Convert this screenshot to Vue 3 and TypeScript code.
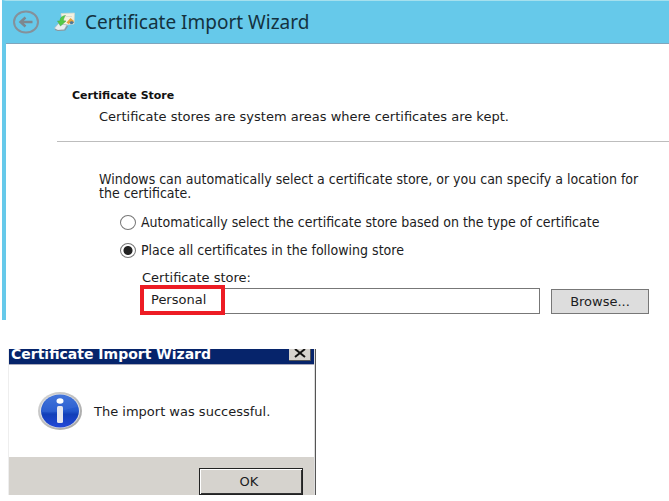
<script setup lang="ts">
import { ref } from 'vue'

type StoreMode = 'auto' | 'manual'

const mode = ref<StoreMode>('manual')
const storeName = ref('Personal')
</script>

<template>
  <main class="page">
    <section class="wizard">
      <header class="titlebar">
        <button class="back" type="button" aria-label="Back">
          <svg viewBox="0 0 26 24" width="26" height="24">
            <ellipse cx="13" cy="12" rx="12" ry="10.5" fill="none" stroke="#85919a" stroke-width="2" />
            <path d="M19.500 12H8M12.500 7.5 7.500 12l5 4.5" fill="none" stroke="#7d888f" stroke-width="2.5" />
          </svg>
        </button>
        <svg class="cert" viewBox="0 0 22 20" width="22" height="20" aria-hidden="true">
          <path d="M7 1.500 20.500 1 20 12 9 13Z" fill="#f5f1df" stroke="#d3d9cf" stroke-width=".7" />
          <path d="M12 4.5h6" stroke="#dadbd2" />
          <path d="m.5 16 4-4.500L13 13l-3 5-7 .5Z" fill="#e9eef0" stroke="#a8b4b8" stroke-width=".7" />
          <path d="m1 17.500 3 1 7-.5 2.500-4" fill="none" stroke="#87979e" stroke-width="1.200" />
          <path d="M11.500 3.500C7.500 4 6 6 6 9H3.500L6.500 14l5.500-5-2.500-.2c0-1.500.5-3.500 2-5.300Z" fill="#55ca45" stroke="#46a84a" stroke-width=".5" />
          <path d="m12.500 10.500 4-4.500 3.500 3-1 2-2-.5-2.500 1.500Z" fill="#e5a23c" />
          <path d="m15.500 10 2.500-1 2 1.500-1.500 1.500-2 .3Z" fill="#4f7897" />
        </svg>
        <h1>Certificate Import Wizard</h1>
      </header>

      <div class="sheet">
        <div class="heading">
          <h2>Certificate Store</h2>
          <p>Certificate stores are system areas where certificates are kept.</p>
        </div>
        <form class="options" @submit.prevent>
          <p class="intro">
            Windows can automatically select a certificate store, or you can specify a location for the certificate.
          </p>
          <label class="choice">
            <input v-model="mode" type="radio" name="mode" value="auto" />
            <span>Automatically select the certificate store based on the type of certificate</span>
          </label>
          <label class="choice">
            <input v-model="mode" type="radio" name="mode" value="manual" />
            <span>Place all certificates in the following store</span>
          </label>
          <div class="store">
            <label for="store-name">Certificate store:</label>
            <div class="store-row">
              <div class="field">
                <input id="store-name" v-model="storeName" type="text" />
                <span class="highlight" aria-hidden="true"></span>
              </div>
              <button class="browse" type="button">Browse...</button>
            </div>
          </div>
        </form>
      </div>
    </section>

    <section class="dialog">
      <header class="dialog-bar">
        <h2>Certificate Import Wizard</h2>
        <button class="close" type="button" aria-label="Close">
          <svg viewBox="0 0 12 10" width="12" height="10">
            <path d="m1 0 10 8M11 0 1 8" stroke="#111" stroke-width="2" />
          </svg>
        </button>
      </header>
      <div class="message">
        <svg viewBox="0 0 46 40" width="46" height="40" aria-hidden="true">
          <defs>
            <linearGradient id="rim" x1="0" y1="0" x2="1" y2="1">
              <stop offset="0" stop-color="#d8d8d8" />
              <stop offset="1" stop-color="#a2a2a2" />
            </linearGradient>
            <linearGradient id="ball" x1="0" y1="0" x2="0" y2="1">
              <stop offset="0" stop-color="#3c70d8" />
              <stop offset=".5" stop-color="#2357cc" />
              <stop offset=".6" stop-color="#123fb8" />
              <stop offset="1" stop-color="#2348d8" />
            </linearGradient>
          </defs>
          <ellipse cx="23" cy="20" rx="22" ry="19" fill="url(#rim)" />
          <ellipse cx="23" cy="20" rx="20" ry="17" fill="#e2e4e8" />
          <ellipse cx="23" cy="20" rx="19" ry="16.500" fill="url(#ball)" />
          <path d="M5 21C5 11 13 4 23 4c9 0 16 5 18 12-10 1-18 7-36 5Z" fill="#6d94ec" opacity=".15" />
          <ellipse cx="23" cy="10" rx="3.500" ry="2.800" fill="#fff" />
          <rect x="20" y="15" width="6" height="17" rx="1.500" fill="#e6e7ef" />
        </svg>
        <p>The import was successful.</p>
      </div>
      <footer class="actions">
        <button class="ok" type="button">OK</button>
      </footer>
    </section>
  </main>
</template>

<style>
body {
  margin: 0;
  background: #fff;
}
</style>

<style scoped>
.page {
  font: 13px/15px "DejaVu Sans", sans-serif;
  color: #1c1c22;
}

h1, h2, p {
  margin: 0;
}

button, input {
  box-sizing: border-box;
  margin: 0;
  font: inherit;
  color: inherit;
}

.wizard {
  margin-left: 2px;
  border-top: 1px solid #a5e0ee;
  border-left: 4px solid #66c9ea;
}

.titlebar {
  display: flex;
  align-items: center;
  height: 42px;
  padding-left: 7px;
  border-bottom: 1px solid #7fa5bc;
  background: #66c9ea;
}

.back {
  display: flex;
  padding: 0;
  border: 0;
  background: none;
}

.cert {
  margin: 0 9px 0 15px;
}

h1 {
  font: 19px/28px "Noto Sans", sans-serif;
  color: #14323f;
}

.sheet {
  padding: 44px 0 6px 51px;
}

.heading {
  padding: 0 0 17px 15px;
  border-bottom: 1px solid #bdbdbd;
}

.heading h2 {
  font-size: 11px;
  line-height: 15px;
  color: #111;
}

.heading p {
  padding: 6px 0 0 27px;
}

.options {
  padding: 30px 20px 0 42px;
}

.intro {
  margin-bottom: 8px;
  line-height: 14px;
}

.intro, .choice {
  font-family: "DejaVu Sans Condensed", "DejaVu Sans", sans-serif;
  font-stretch: condensed;
  font-size: 14px;
}

.choice {
  display: flex;
  align-items: center;
  gap: 5px;
  height: 28px;
  padding-left: 21px;
}

.choice input {
  appearance: none;
  flex: none;
  width: 16px;
  height: 15px;
  border: 1px solid #777;
  border-radius: 50%;
  background: #fff;
}

.choice input:checked {
  background: radial-gradient(circle, #222 0 4px, #fff 5px);
}

.store {
  padding: 6px 0 0 43px;
}

.store-row {
  display: flex;
  align-items: flex-end;
  gap: 11px;
  padding-top: 3px;
}

.field {
  position: relative;
  flex: 1;
}

.field input {
  display: block;
  width: 100%;
  height: 26px;
  padding: 0 8px 3px;
  border: 1px solid #777;
  background: #fff;
}

.highlight {
  position: absolute;
  top: -3px;
  left: -2px;
  box-sizing: border-box;
  width: 85px;
  height: 30px;
  border: 4px solid #ed1c24;
  pointer-events: none;
}

.browse {
  width: 98px;
  height: 25px;
  padding: 0;
  border: 1px solid #777;
  background: #ddd;
}

.dialog {
  box-sizing: border-box;
  width: 308px;
  margin: 29px 0 0 8px;
  border-left: 1px solid #eee;
  border-right: 1px solid #555;
  box-shadow: inset -1px 0 #ddd;
}

.dialog-bar {
  display: flex;
  align-items: flex-start;
  justify-content: space-between;
  height: 15px;
  margin-right: 1px;
  padding: 0 3px 0 2px;
  border-bottom: 1px solid #aab;
  background: #06246b;
}

.dialog-bar h2 {
  font-size: 14px;
  line-height: 10px;
  color: #fff;
}

.close {
  display: flex;
  justify-content: center;
  width: 22px;
  height: 12px;
  padding: 0;
  border: solid #555;
  border-width: 0 1px 1px 0;
  background: #d6d3ce;
}

.message {
  display: flex;
  align-items: center;
  gap: 11px;
  height: 92px;
  padding-left: 28px;
}

.actions {
  display: flex;
  justify-content: flex-end;
  height: 38px;
  margin-right: 1px;
  padding-right: 11px;
  background: #d6d3ce;
}

.ok {
  width: 104px;
  height: 27px;
  margin-top: 11px;
  padding: 0 4px 0 0;
  border: 1px solid #222;
  box-shadow: inset 1px 1px #fff, inset -1px -1px #333;
  background: #d6d3ce;
}
</style>
